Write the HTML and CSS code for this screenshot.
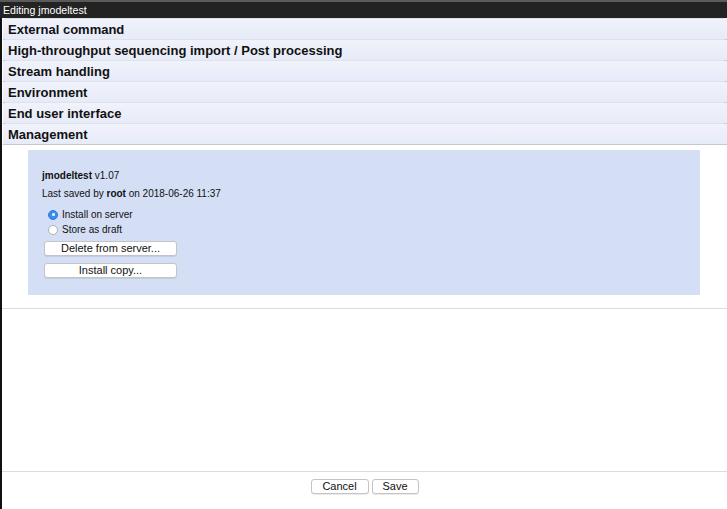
FILE: index.html
```html
<!DOCTYPE html>
<html>
<head>
<meta charset="utf-8">
<link rel="stylesheet" href="styles.css">
</head>
<body>
<div class="window">
  <div class="titlebar">Editing jmodeltest</div>
  <div class="main">
    <div class="acc-header">External command</div>
    <div class="acc-header">High-throughput sequencing import / Post processing</div>
    <div class="acc-header">Stream handling</div>
    <div class="acc-header">Environment</div>
    <div class="acc-header">End user interface</div>
    <div class="acc-header">Management</div>
    <div class="acc-body">
      <div class="panel">
        <div class="line name"><b>jmodeltest</b> v1.07</div>
        <div class="line saved">Last saved by <b>root</b> on 2018-06-26 11:37</div>
        <label class="radio"><span class="dot checked"></span>Install on server</label>
        <label class="radio"><span class="dot"></span>Store as draft</label>
        <button class="btn wide first">Delete from server...</button>
        <button class="btn wide">Install copy...</button>
      </div>
    </div>
    <div class="spacer"></div>
    <div class="footer">
      <button class="btn cancel">Cancel</button>
      <button class="btn save">Save</button>
    </div>
  </div>
</div>
</body>
</html>
```
FILE: styles.css
```css
html, body {
  margin: 0;
  padding: 0;
  background: #ffffff;
}
body {
  font-family: "Liberation Sans", Arial, sans-serif;
  color: #111;
}
.window {
  width: 727px;
  height: 509px;
  display: flex;
  flex-direction: column;
  border-left: 2px solid #111;
  box-sizing: border-box;
}
.titlebar {
  height: 16px;
  background: #232323;
  border-top: 2px solid #5a5a5a;
  color: #fff;
  font-size: 10.6px;
  line-height: 16px;
  margin-left: -2px;
  padding-left: 3px;
}
.main {
  flex: 1;
  display: flex;
  flex-direction: column;
}
.acc-header {
  height: 20px;
  line-height: 21px;
  margin-left: 1px;
  padding-left: 5px;
  font-size: 13px;
  font-weight: bold;
  color: #111;
  background: linear-gradient(#f1f3fb, #e6ebf8);
  border-bottom: 1px solid #c6c8d0;
  border-top: 1px solid #e0e2ea;
  border-radius: 4px 4px 0 0;
  margin-top: -1px;
}
.acc-header:first-child {
  margin-top: 0;
}
.acc-body {
  padding: 5px 0 13px 26px;
  border-bottom: 1px solid #dcdcdc;
}
.panel {
  width: 672px;
  height: 145px;
  box-sizing: border-box;
  background: #d4def5;
  padding: 19px 0 0 14px;
  font-size: 10px;
  display: flex;
  flex-direction: column;
  align-items: flex-start;
}
.line {
  height: 13px;
  line-height: 13px;
}
.saved {
  margin-top: 5px;
}
.radio {
  display: flex;
  align-items: center;
  margin-left: 6px;
  height: 15px;
  line-height: 15px;
}
.radio:first-of-type {
  margin-top: 7px;
}
.dot {
  width: 10px;
  height: 10px;
  box-sizing: border-box;
  border-radius: 50%;
  background: #fff;
  border: 1px solid #b0b0b0;
  margin-right: 4px;
  position: relative;
}
.dot.checked {
  background: #3b8cf0;
  border-color: #2f7be0;
}
.dot.checked::after {
  content: "";
  position: absolute;
  left: 2.5px;
  top: 2.5px;
  width: 3px;
  height: 3px;
  border-radius: 50%;
  background: #fff;
}
.btn {
  font-family: "Liberation Sans", Arial, sans-serif;
  font-size: 11px;
  height: 15px;
  line-height: 13px;
  padding: 0;
  background: #fff;
  border: 1px solid #c4c4c4;
  border-radius: 3px;
  color: #111;
  box-shadow: 0 1px 0 rgba(0,0,0,0.08);
}
.btn.wide {
  width: 133px;
  margin-left: 2px;
  margin-top: 7px;
}
.btn.wide.first {
  margin-top: 4px;
}
.spacer {
  flex: 1;
}
.footer {
  border-top: 1px solid #dcdcdc;
  height: 38px;
  display: flex;
  justify-content: center;
  align-items: flex-start;
  gap: 3px;
  padding-top: 7px;
  box-sizing: border-box;
}
.btn.cancel {
  width: 58px;
}
.btn.save {
  width: 47px;
}
```
